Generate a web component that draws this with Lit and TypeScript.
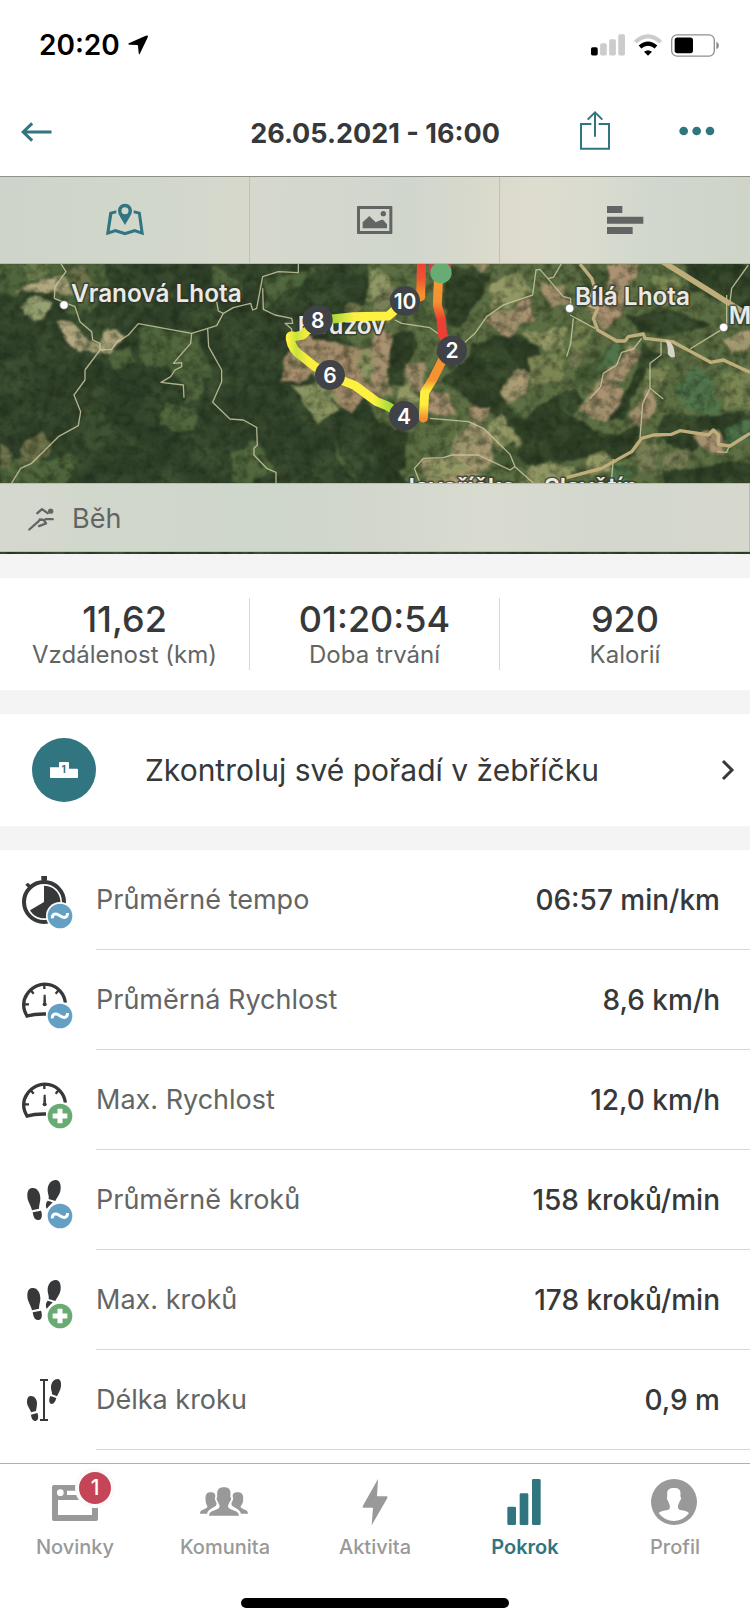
import { LitElement, html, svg, css } from "lit";
import { customElement } from "lit/decorators.js";

const wave = svg`
  <circle cx="180" cy="198" r="42" fill="#fff"/>
  <circle cx="180" cy="198" r="37" fill="#64a0c3"/>
  <path d="M157 205C156 192 168 188 178 196S202 207 203 189" fill="none" stroke="#fff" stroke-width="9"/>`;

const plus = svg`
  <circle cx="180" cy="198" r="42" fill="#fff"/>
  <circle cx="180" cy="198" r="37" fill="#68ab73"/>
  <path d="M180 176V220M158 198H202" stroke="#fff" stroke-width="15"/>`;

const stopwatch = svg`
  <circle cx="132" cy="156" r="60" fill="none" stroke="#363839" stroke-width="12"/>
  <path d="M124 78H141V92H124ZM76 104L84 98L94 108L86 115Z" fill="#363839"/>
  <path d="M132 156V107A49 49 0 1 1 90 181Z" fill="#363839"/>`;

const gauge = svg`
  <path d="M82 199C66 176 69 150 81 133A62 62 0 0 1 196 158" fill="none" stroke="#363839" stroke-width="10"/>
  <path d="M77 199Q106 191 138 192" fill="none" stroke="#363839" stroke-width="10"/>
  <path d="M133 101V117M72 163H87M91 119L101 131M177 119L167 131" stroke="#363839" stroke-width="7"/>
  <path d="M131 134H137L138 158H130Z" fill="#363839"/>
  <circle cx="134" cy="163" r="6" fill="#363839"/>`;

const steps = svg`
  <g fill="#363839">
    <path d="M96 114C112 112 121 128 121 145C121 157 117 165 117 176L96 181C93 165 82 155 82 138C82 124 86 115 96 114Z"/>
    <path d="M98 187L123 182C127 192 128 209 115 210C103 211 100 198 98 187Z"/>
    <path d="M168 90C178 90 183 102 182 116C181 134 170 142 166 153L146 147C148 136 142 130 143 117C144 101 155 89 168 90Z"/>
    <path d="M143 152L158 157L140 176Q134 162 143 152Z"/>
  </g>`;

const stride = svg`
  <g fill="#363839">
    <path d="M120 87H144V93H135V207H144V213H120V207H129V93H120Z"/>
    <path d="M91 138C103 137 111 147 111 160C111 170 109 177 108 183L93 187C91 177 81 169 81 156C81 146 84 139 91 138Z"/>
    <path d="M93 194L112 189C116 197 116 211 107 213C98 213 94 204 93 194Z"/>
    <path d="M173 87C181 87 184 96 183 108C182 120 175 130 171 139L156 133C157 125 152 120 153 110C154 97 162 87 173 87Z"/>
    <path d="M151 138L169 144C166 155 162 162 155 162C146 161 146 147 151 138Z"/>
  </g>`;

const metrics = [
  { icon: stopwatch, badge: wave, label: "Průměrné tempo", value: "06:57 min/km" },
  { icon: gauge, badge: wave, label: "Průměrná Rychlost", value: "8,6 km/h" },
  { icon: gauge, badge: plus, label: "Max. Rychlost", value: "12,0 km/h" },
  { icon: steps, badge: wave, label: "Průměrně kroků", value: "158 kroků/min" },
  { icon: steps, badge: plus, label: "Max. kroků", value: "178 kroků/min" },
  { icon: stride, badge: null, label: "Délka kroku", value: "0,9 m" },
];

const totals = [
  { value: "11,62", label: "Vzdálenost (km)" },
  { value: "01:20:54", label: "Doba trvání" },
  { value: "920", label: "Kalorií" },
];

const kilometres = [
  { x: 953, y: 195, n: "8" },
  { x: 990, y: 360, n: "6" },
  { x: 1212, y: 483, n: "4" },
  { x: 1356, y: 287, n: "2" },
  { x: 1215, y: 138, n: "10" },
];

const places = [
  { x: 213, y: 140, name: "Vranová Lhota" },
  { x: 893, y: 237, name: "Bouzov" },
  { x: 1725, y: 150, name: "Bílá Lhota" },
  { x: 2186, y: 207, name: "M" },
  { x: 1203, y: 724, name: "Javoříčko" },
  { x: 1632, y: 724, name: "Slavětín" },
];

const navItems = [
  {
    label: "Novinky", badge: "1", box: "153 84 144 144", shape: svg`
      <path fill-rule="evenodd" d="M162 105H288Q294 105 294 111V207Q294 213 288 213H162Q156 213 156 207V111Q156 105 162 105ZM174 150V195H276V150ZM201 122V135H276V122Z"/>
      <circle cx="181" cy="128" r="10" fill="#fff"/>`,
  },
  {
    label: "Komunita", badge: "", box: "603 84 144 144", shape: svg`
      <path d="M627 197C627 178 656 182 659 170C659 164 655 160 653 154C648 148 650 142 652 140C649 118 657 112 672 112S694 118 691 140C694 143 695 149 690 154C688 160 684 164 684 170C688 182 717 178 717 197Z"/>
      <path d="M600 191C600 178 617 179 622 172C623 166 617 163 617 153C615 134 619 127 632 127C642 127 646 130 646 139C643 145 645 152 649 157C650 161 650 164 648 167C640 174 625 176 621 191Z"/>
      <path d="M744 191C744 178 727 179 722 172C721 166 729 163 729 153C732 134 726 127 713 127C702 127 698 130 698 139C701 145 699 152 695 157C694 161 694 164 696 167C704 174 719 176 723 191Z"/>`,
  },
  {
    label: "Aktivita", badge: "", box: "1053 84 144 144",
    shape: svg`<path d="M1134 87L1088 169Q1087 173 1091 173H1119L1115 226L1162 144Q1164 139 1160 139H1131Z"/>`,
  },
  {
    label: "Pokrok", badge: "", box: "378 84 144 144", shape: svg`
      <rect x="397" y="170" width="26" height="55" rx="4"/>
      <rect x="434" y="130" width="26" height="95" rx="4"/>
      <rect x="471" y="87" width="26" height="138" rx="4"/>`,
  },
  {
    label: "Profil", badge: "", box: "828 84 144 144", shape: svg`
      <circle cx="897" cy="156" r="69"/>
      <path fill="#fff" d="M851 189C862 179 878 183 884 176C887 166 881 162 880 154C875 149 875 143 877 139C874 119 882 114 897 114S919 119 916 139C919 143 919 149 914 154C912 162 907 166 910 176C916 183 932 179 942 189C919 221 874 221 851 189Z"/>`,
  },
];

@customElement("route-map")
class RouteMap extends LitElement {
  static styles = css`
    :host { display: block; overflow: hidden; }
    .canvas { display: block; width: 100%; height: 100%; }
    .place {
      font: 600 73px Inter, "Liberation Sans", sans-serif;
      fill: #e9e9e6;
      stroke: #2c3328;
      stroke-opacity: 0.7;
      stroke-width: 9px;
      stroke-linejoin: round;
      paint-order: stroke;
    }
    .km {
      font: 600 63px Inter, "Liberation Sans", sans-serif;
      fill: #fff;
      text-anchor: middle;
    }
  `;

  render() {
    return html`
      <svg class="canvas" viewBox="0 27 2250 870" preserveAspectRatio="xMidYMid slice" role="img" aria-label="Mapa trasy">
        <defs>
          <filter id="ragged" x="-5%" y="-5%" width="110%" height="110%" color-interpolation-filters="sRGB">
            <feTurbulence type="fractalNoise" baseFrequency="0.014" numOctaves="3" seed="7"/>
            <feDisplacementMap in="SourceGraphic" scale="40" xChannelSelector="R" yChannelSelector="G"/>
            <feGaussianBlur stdDeviation="3"/>
          </filter>
          <filter id="mottle" x="0" y="0" width="100%" height="100%" color-interpolation-filters="sRGB">
            <feTurbulence type="fractalNoise" baseFrequency="0.009 0.012" numOctaves="5" seed="21"/>
            <feColorMatrix values="0 0 0 0 0.40  0 0 0 0 0.50  0 0 0 0 0.30  2.6 0 0 0 -1.0"/>
          </filter>
          <filter id="grain" x="0" y="0" width="100%" height="100%" color-interpolation-filters="sRGB">
            <feTurbulence type="fractalNoise" baseFrequency="0.035" numOctaves="4" seed="4"/>
            <feColorMatrix values="0 0 0 0 0.09  0 0 0 0 0.13  0 0 0 0 0.06  0 2.4 0 0 -0.95"/>
          </filter>
          <linearGradient id="loop" gradientUnits="userSpaceOnUse" x1="865" y1="0" x2="1212" y2="0">
            <stop offset="0" stop-color="#fdf141"/><stop offset=".07" stop-color="#c8e33c"/>
            <stop offset=".17" stop-color="#fbee3d"/><stop offset=".74" stop-color="#fdf141"/>
            <stop offset=".88" stop-color="#a5dc3a"/><stop offset="1" stop-color="#d2e63c"/>
          </linearGradient>
          <linearGradient id="upper" gradientUnits="userSpaceOnUse" x1="990" y1="0" x2="1200" y2="0">
            <stop offset="0" stop-color="#9ad53c"/><stop offset=".35" stop-color="#fdf141"/><stop offset="1" stop-color="#fdf141"/>
          </linearGradient>
          <linearGradient id="north" gradientUnits="userSpaceOnUse" x1="0" y1="30" x2="0" y2="140">
            <stop offset="0" stop-color="#ef4435"/><stop offset=".35" stop-color="#f0532f"/><stop offset=".8" stop-color="#f4912f"/>
          </linearGradient>
          <linearGradient id="east" gradientUnits="userSpaceOnUse" x1="0" y1="80" x2="0" y2="490">
            <stop offset="0" stop-color="#f59a30"/><stop offset=".15" stop-color="#f4902f"/>
            <stop offset=".28" stop-color="#ec3e34"/><stop offset=".42" stop-color="#ec3e34"/>
            <stop offset=".56" stop-color="#f49330"/><stop offset=".72" stop-color="#f49330"/>
            <stop offset=".8" stop-color="#fdee3f"/><stop offset=".9" stop-color="#fdee3f"/><stop offset="1" stop-color="#f3902f"/>
          </linearGradient>
        </defs>

        <rect x="0" y="27" width="2250" height="870" fill="#2f4029"/>

        <g filter="url(#ragged)">
          <path fill="#4d623b" d="M-20 0H300L330 90L270 180L200 170L150 110L0 125ZM410 215L600 240L640 370L560 400L500 340L430 330ZM320 290L400 280L410 330L340 345ZM470 500L500 440L590 460L580 530L540 525ZM560 360L620 370L600 430L550 440ZM640 40L740 90L720 130L640 110ZM790 70L900 55L960 40L860 110L800 160ZM700 600L745 545L800 580L830 650L760 690L690 690ZM1000 560L1050 620L1070 683L1040 640ZM0 620L70 600L140 620L200 590L240 610L190 690H0Z"/>
          <path fill="#6f724b" d="M70 560L130 530L155 570L120 620L60 620ZM200 40L250 30L280 80L265 180L235 130ZM0 560L40 590L30 650L0 640ZM1030 150L1140 140V180L1040 200Z"/>
          <path fill="#b9ac85" d="M50 110L110 75L200 70L225 125L160 112ZM170 195L220 200L255 245L300 262L320 222L378 240L335 290L245 295L195 255Z"/>
          <path fill="#98a172" d="M60 150L110 122L155 140L130 190L65 180Z"/>
          <path fill="#6a7b4c" d="M60 30L150 27L160 60L90 75Z"/>
          <path fill="#5c6d43" d="M1100 0H2270V700H1260L1180 640L1140 520L1100 430L1040 220L1100 150Z"/>
          <path fill="#a68d6b" d="M850 310L900 240L990 260L1125 290L1180 230V420L1090 430L1060 480L1000 440L940 350L900 385L850 380Z"/>
          <path fill="#8f9764" d="M885 400L950 385L1010 460L950 505L910 450ZM1060 330L1100 290L1150 340L1120 390ZM1100 60L1140 40L1180 60L1170 120L1100 130ZM940 350L990 400L1020 440L960 420Z"/>
        </g>

        <g filter="url(#ragged)" transform="translate(1125 0)">
          <path fill="#2d3d25" d="M235 27L345 50L320 130L250 225L215 210L210 80ZM200 370L260 330L300 260L400 230L490 270L500 320L430 360L385 430L440 490L540 420L600 500L700 540L790 510L800 590L700 620L560 620L480 630L430 610L440 550L340 470L280 440ZM60 240L100 220L125 270L90 340L80 400L35 390ZM760 180L880 160L1010 210L900 245L800 240ZM930 27H1145V210L1060 150L950 100ZM800 260L860 300L780 420L750 490L690 500L760 400ZM860 480H1145V560H1030L930 600L855 540ZM860 650L1145 610V700H860ZM0 500L100 530L90 640L0 690ZM540 420L600 400L630 450L590 480Z"/>
          <path fill="#ab9272" d="M370 165L460 135L480 200L430 212L410 255L335 200ZM485 75L560 90L590 150L530 150L490 115ZM690 30L795 27L770 110L740 190L690 220L640 170L700 110ZM720 330L770 280L800 290L740 370L670 380ZM680 370L755 400L730 470L690 500L610 465ZM765 470L820 400L845 430L820 520L770 510ZM90 320L150 320L150 410L100 410ZM160 410L220 410L235 490L160 475ZM280 460L340 450L320 510L280 490ZM-10 230L40 225L50 330L-10 410ZM960 540L1030 530L1050 590L980 580ZM270 27H350L320 42Z"/>
          <path fill="#ad9c76" d="M240 540L290 500L350 540L350 610L330 640L300 700H150L140 610H230ZM380 420L420 340L465 350L455 410L400 445ZM1040 250L1125 220V290L1070 300Z"/>
          <path fill="#959966" d="M340 90L440 55L470 120L350 165ZM440 240L575 215L570 290L510 285ZM340 500L380 480L440 560L400 610L340 540ZM60 400L100 400L140 440L70 450ZM150 620L250 610L290 640L160 680ZM470 620L600 640L560 700H430ZM640 610L700 590L740 640L640 665Z"/>
          <path fill="#7d8754" d="M450 310L570 290L565 375L470 395ZM600 190L650 220L620 290L590 270ZM830 60L900 70L930 130L860 150ZM1040 350H1130V470L1045 470ZM810 340L880 330L870 400L820 400Z"/>
          <path fill="#4f744c" d="M650 305L740 260L730 330L670 355ZM900 400L960 340L1000 350L1035 460L1000 480L930 460ZM1040 520L1130 490V560L1060 575ZM710 620L770 650L760 683L700 683Z"/>
          <path fill="#7d7f59" d="M780 560L850 560L855 640L800 655ZM870 590L950 590L920 650L870 650ZM0 130L60 90L60 200L0 220ZM570 300L640 280L600 350Z"/>
          <path fill="#465936" d="M70 90L140 140L180 230L120 200ZM600 350L700 280L660 380L600 400ZM350 600L420 560L460 640L400 640ZM620 60L690 40L700 100L660 130Z"/>
        </g>
        <rect x="0" y="27" width="2250" height="870" filter="url(#mottle)" opacity=".3"/>
        <rect x="0" y="27" width="2250" height="870" filter="url(#grain)" opacity=".45"/>

        <g fill="none" stroke="#c9c79e" stroke-width="4" stroke-linejoin="round" opacity=".85">
          <path d="M183 27L198 50L165 95L163 130L225 155L240 200L275 230L278 255L300 265L300 285L255 345V375L222 420L242 470L235 512L175 545L95 625L62 640L35 684"/>
          <path d="M300 285L335 283L350 262L385 240L415 206L575 235L650 212L670 175L700 158L752 145L758 165L770 160L788 65L835 50L895 53V27M650 140L655 168L670 175M788 100L790 163L825 180L875 190L878 205L855 205L875 222V235"/>
          <path d="M575 235L572 265L520 325L545 323V335L525 345L512 365L483 382L550 390L552 428M623 222L626 275L665 345V380L638 442L690 492L730 495L770 517L772 570L762 580V600L800 640L828 652V684"/>
          <path d="M1185 195L1205 205L1290 218L1320 240M1395 262L1425 235L1460 185L1510 150L1598 120L1608 45L1620 43L1690 125L1712 130V160M1645 70L1660 67L1684 27M1290 490L1405 500L1450 520L1530 598L1545 635L1600 684M1260 684L1243 640L1270 610L1330 608L1355 600H1435L1530 645L1545 635"/>
          <path d="M1710 180L1785 220M1720 190L1712 265L1700 305M1925 250L1900 282L1865 292L1850 330L1810 355L1802 395L1770 430M1983 262V300L1950 325V400L1928 445L1920 550M1950 400L1990 432M2070 282L2155 230L2180 215V120M2190 140L2195 100L2245 30M1840 612L1835 670M2150 590L2180 592L2187 575"/>
        </g>
        <g fill="none" stroke="#bfae7c" stroke-width="10" stroke-linejoin="round">
          <path d="M1740 27L1775 70L1783 95L1765 150L1793 160L1780 190L1793 225L1850 258H1875L1885 245L1930 237L1935 250L2018 260L2132 322L2170 315L2250 352"/>
          <path d="M1700 668L1805 640L1895 590L1925 550L1960 540L2015 538L2040 527L2125 540L2140 525L2155 540V568L2190 573L2250 535"/>
          <path d="M1985 18L2260 190" stroke-width="17"/>
        </g>
        <path d="M1995 255Q2022 255 2025 305Q2012 312 2003 296Q2005 270 1995 255Z" fill="#d6d3c4"/>

        ${places.map((p) => svg`<text class="place" x=${p.x} y=${p.y}>${p.name}</text>`)}
        <g fill="#fff" stroke="#555" stroke-opacity=".6" stroke-width="4">
          <circle cx="192" cy="150" r="13"/>
          <circle cx="1709" cy="160" r="13"/>
          <circle cx="2171" cy="217" r="13"/>
        </g>

        <g fill="none" stroke-width="27" stroke-linecap="round" stroke-linejoin="round">
          <path stroke="url(#loop)" d="M953 195L908 240L884 245Q866 236 872 256Q876 284 905 303L945 335L990 362L1065 392L1130 440L1160 452L1212 483"/>
          <path stroke="url(#upper)" d="M990 193L1060 185L1165 183L1190 160"/>
          <path stroke="url(#north)" d="M1215 138L1262 125L1265 10"/>
          <path stroke="url(#east)" d="M1270 489L1274 412L1300 370L1330 310L1356 287L1328 240L1323 190L1312 150L1315 80"/>
        </g>
        <path d="M1287 20H1352V50H1287Z" fill="#c84055"/>
        <circle cx="1323" cy="53" r="32" fill="#68ab73"/>
        ${kilometres.map((k) => svg`
          <circle cx=${k.x} cy=${k.y} r="45" fill="#404247"/>
          <text class="km" x=${k.x} y=${k.y + 23}>${k.n}</text>`)}
      </svg>`;
  }
}

@customElement("app-root")
class AppRoot extends LitElement {
  static styles = css`
    :host {
      display: flex;
      flex-direction: column;
      min-height: 100vh;
      background: #fff;
      color: #363839;
      font-family: Inter, "Liberation Sans", sans-serif;
      font-size: 27px;
      line-height: 36px;
    }
    *, *::before { box-sizing: border-box; }
    svg { display: block; overflow: visible; flex: none; }
    button {
      display: flex;
      align-items: center;
      justify-content: center;
      margin: 0;
      padding: 0;
      border: 0;
      background: none;
      color: inherit;
      font: inherit;
    }
    a { color: inherit; text-decoration: none; }

    .status {
      display: flex;
      align-items: center;
      justify-content: space-between;
      height: 88px;
      padding: 2px 31px 0 39px;
      color: #000;
    }
    .clock { display: flex; align-items: center; gap: 8px; font-size: 28px; font-weight: 600; }
    .signals { display: flex; align-items: center; gap: 9px; }

    .header {
      display: grid;
      grid-template-columns: 1fr auto 1fr;
      align-items: center;
      height: 88px;
      padding: 0 35px 0 21px;
      color: #30757f;
    }
    .title { margin: 0; padding: 3px 0 0 14px; color: #363839; font-size: 27px; font-weight: 700; line-height: 36px; }
    .actions { display: flex; align-items: center; justify-content: flex-end; gap: 69px; }
    .back { justify-self: start; }

    .tabs {
      display: grid;
      grid-template-columns: repeat(3, 1fr);
      height: 88px;
      border-top: 1px solid #8d9189;
      border-bottom: 1px solid #b4b9ae;
      background: linear-gradient(92deg, #cfd4ca, #d2d7cb 20%, #d6d8cc 33%, #d3d7cc 43%, #d1d6cd 55%, #d9d9cc 64%, #dedccf 70%, #dadccf 78%, #d1d7cd 87%, #cfd4c8);
      color: #636564;
    }
    .tab:not(:last-child) { border-right: 1px solid #bfc2b8; }
    .tab.active { color: #30757f; }

    .map { display: grid; height: 290px; }
    .map > * { grid-area: 1 / 1; min-width: 0; }
    .picture { height: 290px; }
    .sport {
      display: flex;
      align-items: center;
      align-self: end;
      gap: 18px;
      height: 69px;
      margin-bottom: 2px;
      padding: 2px 0 0 28px;
      border: 1px solid #b9beb3;
      border-width: 1px 1px 1px 0;
      background: linear-gradient(90deg, #d5d8ce, #d2d7cc 12%, #cfd6cb 35%, #d3d7cd 52%, #d9dbd0 65%, #d3d7cd 80%, #d6d8ce);
      color: #636564;
      z-index: 1;
    }

    .content { display: flex; flex-direction: column; flex: 1; gap: 24px; background: #f4f4f4; padding-top: 24px; }

    .totals {
      display: grid;
      grid-template-columns: repeat(3, 1fr);
      margin: 0;
      padding: 20px 0;
      background: #fff;
    }
    .total { display: flex; flex-direction: column-reverse; align-items: center; height: 72px; justify-content: center; }
    .total:not(:last-child) { border-right: 1px solid #d8d8d8; }
    .total dt { color: #636564; font-size: 24px; line-height: 30px; }
    .total dd { margin: 0; font-size: 36px; font-weight: 500; line-height: 42px; }

    .ranking {
      display: flex;
      align-items: center;
      height: 112px;
      padding: 0 16px 0 32px;
      background: #fff;
      font-size: 30px;
    }
    .medal {
      display: grid;
      place-items: center;
      width: 64px;
      height: 64px;
      margin-right: 49px;
      border-radius: 50%;
      background: #30757f;
    }
    .one { font: 700 30px Inter, sans-serif; fill: #30757f; text-anchor: middle; }
    .ranking-text { flex: 1; }

    .metrics { flex: 1; margin: 0; padding-bottom: 13px; background: #fff; }
    .metric { display: flex; align-items: center; height: 100px; padding-left: 20px; }
    .pair {
      display: flex;
      align-items: center;
      justify-content: space-between;
      flex: 1;
      height: 100px;
      margin-left: 22px;
      padding-right: 30px;
      border-bottom: 1px solid #d8d8d8;
    }
    .pair dt { color: #636564; }
    .pair dd { margin: 0; font-size: 28px; font-weight: 500; }

    .nav {
      position: sticky;
      bottom: 0;
      border-top: 1px solid #b0b0b0;
      background: #fff;
      padding: 14px 0 16px;
    }
    .items { display: grid; grid-template-columns: repeat(5, 1fr); margin: 0; padding: 0; list-style: none; }
    .item {
      position: relative;
      display: flex;
      flex-direction: column;
      align-items: center;
      gap: 7px;
      color: #999;
      font-size: 20px;
      font-weight: 500;
      line-height: 28px;
    }
    .item.active { color: #30757f; font-weight: 600; }
    .icon { position: relative; }
    .count {
      position: absolute;
      top: -10px;
      left: 24px;
      width: 40px;
      height: 40px;
      border: 4px solid #fafafa;
      border-radius: 50%;
      background: #c54558;
      color: #fff;
      font-size: 21px;
      font-weight: 500;
      line-height: 32px;
      text-align: center;
    }
    .home { width: 268px; height: 10px; margin: 37px auto 0; border-radius: 5px; background: #000; }
  `;

  render() {
    return html`
      <div class="status">
        <div class="clock">
          <span>20:20</span>
          <svg width="20" height="20" viewBox="384 106 58 58"><path d="M441 108Q443 106 441 113L419 159Q416 166 415 158L413 138Q413 135 410 135L389 134Q381 133 388 129L434 109Q439 106 441 108Z"/></svg>
        </div>
        <div class="signals">
          <svg width="34" height="22" viewBox="649 102 101 64">
            <rect x="649" y="141" width="20" height="24" rx="5"/>
            <path fill="#ccc" d="M681 129h10q5 0 5 5v26q0 5-5 5h-10q-5 0-5-5v-26q0-5 5-5ZM708 117h10q5 0 5 5v38q0 5-5 5h-10q-5 0-5-5v-38q0-5 5-5ZM735 102h10q5 0 5 5v53q0 5-5 5h-10q-5 0-5-5v-53q0-5 5-5Z"/>
          </svg>
          <svg width="28" height="22" viewBox="777 100 84 66" fill="none">
            <path d="M781 124Q819 90 857 124" stroke="#ccc" stroke-width="12"/>
            <path d="M795 139Q819 119 843 139" stroke="#000" stroke-width="12"/>
            <path d="M807 153Q819 144 831 153L819 165Z" fill="#000"/>
          </svg>
          <svg width="48" height="23" viewBox="888 100 144 68">
            <rect x="890" y="102" width="128" height="64" rx="16" fill="none" stroke="#8f8f8f" stroke-width="4"/>
            <rect x="899" y="110" width="55" height="47" rx="8"/>
            <path d="M1024 123Q1032 126 1032 134T1024 145Z" fill="#8f8f8f"/>
          </svg>
        </div>
      </div>

      <header class="header">
        <button class="back" aria-label="Zpět">
          <svg width="31" height="20" viewBox="63 367 92 60" fill="none" stroke="currentColor" stroke-width="9"><path d="M154 397H70M96 371L69 397L96 423"/></svg>
        </button>
        <h1 class="title">26.05.2021 - 16:00</h1>
        <div class="actions">
          <button aria-label="Sdílet">
            <svg width="30" height="44" viewBox="615 330 90 132" fill="none" stroke="currentColor" stroke-width="6"><path d="M649 372H618V446H702V372H671M660 410V337M638 359L660 337L682 359"/></svg>
          </button>
          <button aria-label="Další možnosti">
            <svg width="36" height="10" viewBox="913 382 108 30" fill="currentColor"><circle cx="927" cy="394" r="13"/><circle cx="966" cy="394" r="13"/><circle cx="1006" cy="394" r="13"/></svg>
          </button>
        </div>
      </header>

      <div class="tabs">
        <button class="tab active" aria-label="Mapa">
          <svg width="38" height="36" viewBox="318 605 114 108" fill="currentColor">
            <path d="M349 630L328 635L318 705L346 696L375 705L404 696L432 705L422 635L401 630V639L414 642L421 692L404 686L375 695L346 686L329 692L337 642L349 639Z"/>
            <path fill-rule="evenodd" d="M375 610C362 610 354 620 354 631C354 644 366 656 375 674C384 656 396 644 396 631C396 620 388 610 375 610ZM375 621A10 10 0 1 1 375 642A10 10 0 1 1 375 621Z"/>
          </svg>
        </button>
        <button class="tab" aria-label="Fotky">
          <svg width="36" height="28" viewBox="1072 618 108 84" fill="currentColor">
            <path fill-rule="evenodd" d="M1074 618H1176Q1178 618 1178 620V700Q1178 702 1176 702H1074Q1072 702 1072 700V620Q1072 618 1074 618ZM1081 627V693H1169V627Z"/>
            <path d="M1089 685V667L1109 648L1128 667L1144 660L1150 659L1162 673V685Z"/><circle cx="1151" cy="641" r="8"/>
          </svg>
        </button>
        <button class="tab" aria-label="Grafy">
          <svg width="36" height="28" viewBox="697 618 108 84" fill="currentColor"><path d="M697 618H743V639H697ZM697 650H806V671H697ZM697 681H774V702H697Z"/></svg>
        </button>
      </div>

      <div class="map">
        <route-map class="picture"></route-map>
        <div class="sport">
          <svg width="26" height="24" viewBox="83 760 78 71" fill="none" stroke="currentColor" stroke-width="7" stroke-linecap="round" stroke-linejoin="round">
            <path d="M87 827L116 801M111 778L125 766L142 778M118 797L130 798L137 809L116 817M136 796H157"/>
            <circle cx="151" cy="772" r="8" fill="currentColor" stroke="none"/>
          </svg>
          <span>Běh</span>
        </div>
      </div>

      <main class="content">
        <dl class="totals">
          ${totals.map((t) => html`<div class="total"><dt>${t.label}</dt><dd>${t.value}</dd></div>`)}
        </dl>

        <a class="ranking" href="#zebricek">
          <span class="medal">
            <svg width="28" height="16" viewBox="0 0 84 48">
              <path fill="#fff" d="M0 16H27V3Q27 0 30 0H54Q57 0 57 3V20H81Q84 20 84 23V45Q84 48 81 48H3Q0 48 0 45Z"/>
              <text class="one" x="41" y="32">1</text>
            </svg>
          </span>
          <span class="ranking-text">Zkontroluj své pořadí v žebříčku</span>
          <svg width="13" height="20" viewBox="0 0 13 20" fill="none" stroke="currentColor" stroke-width="3"><path d="M2 1L11 10L2 19"/></svg>
        </a>

        <dl class="metrics">
          ${metrics.map((m) => html`
            <div class="metric">
              <svg width="54" height="54" viewBox="60 69 162 162">${m.icon}${m.badge}</svg>
              <div class="pair"><dt>${m.label}</dt><dd>${m.value}</dd></div>
            </div>`)}
        </dl>
      </main>

      <nav class="nav">
        <ul class="items">
          ${navItems.map((n) => html`
            <li>
              <a class="item ${n.label === "Pokrok" ? "active" : ""}" href="#${n.label.toLowerCase()}">
                <span class="icon">
                  <svg width="48" height="48" viewBox=${n.box} fill="currentColor">${n.shape}</svg>
                  ${n.badge ? html`<span class="count">${n.badge}</span>` : null}
                </span>
                <span>${n.label}</span>
              </a>
            </li>`)}
        </ul>
        <div class="home"></div>
      </nav>`;
  }
}
